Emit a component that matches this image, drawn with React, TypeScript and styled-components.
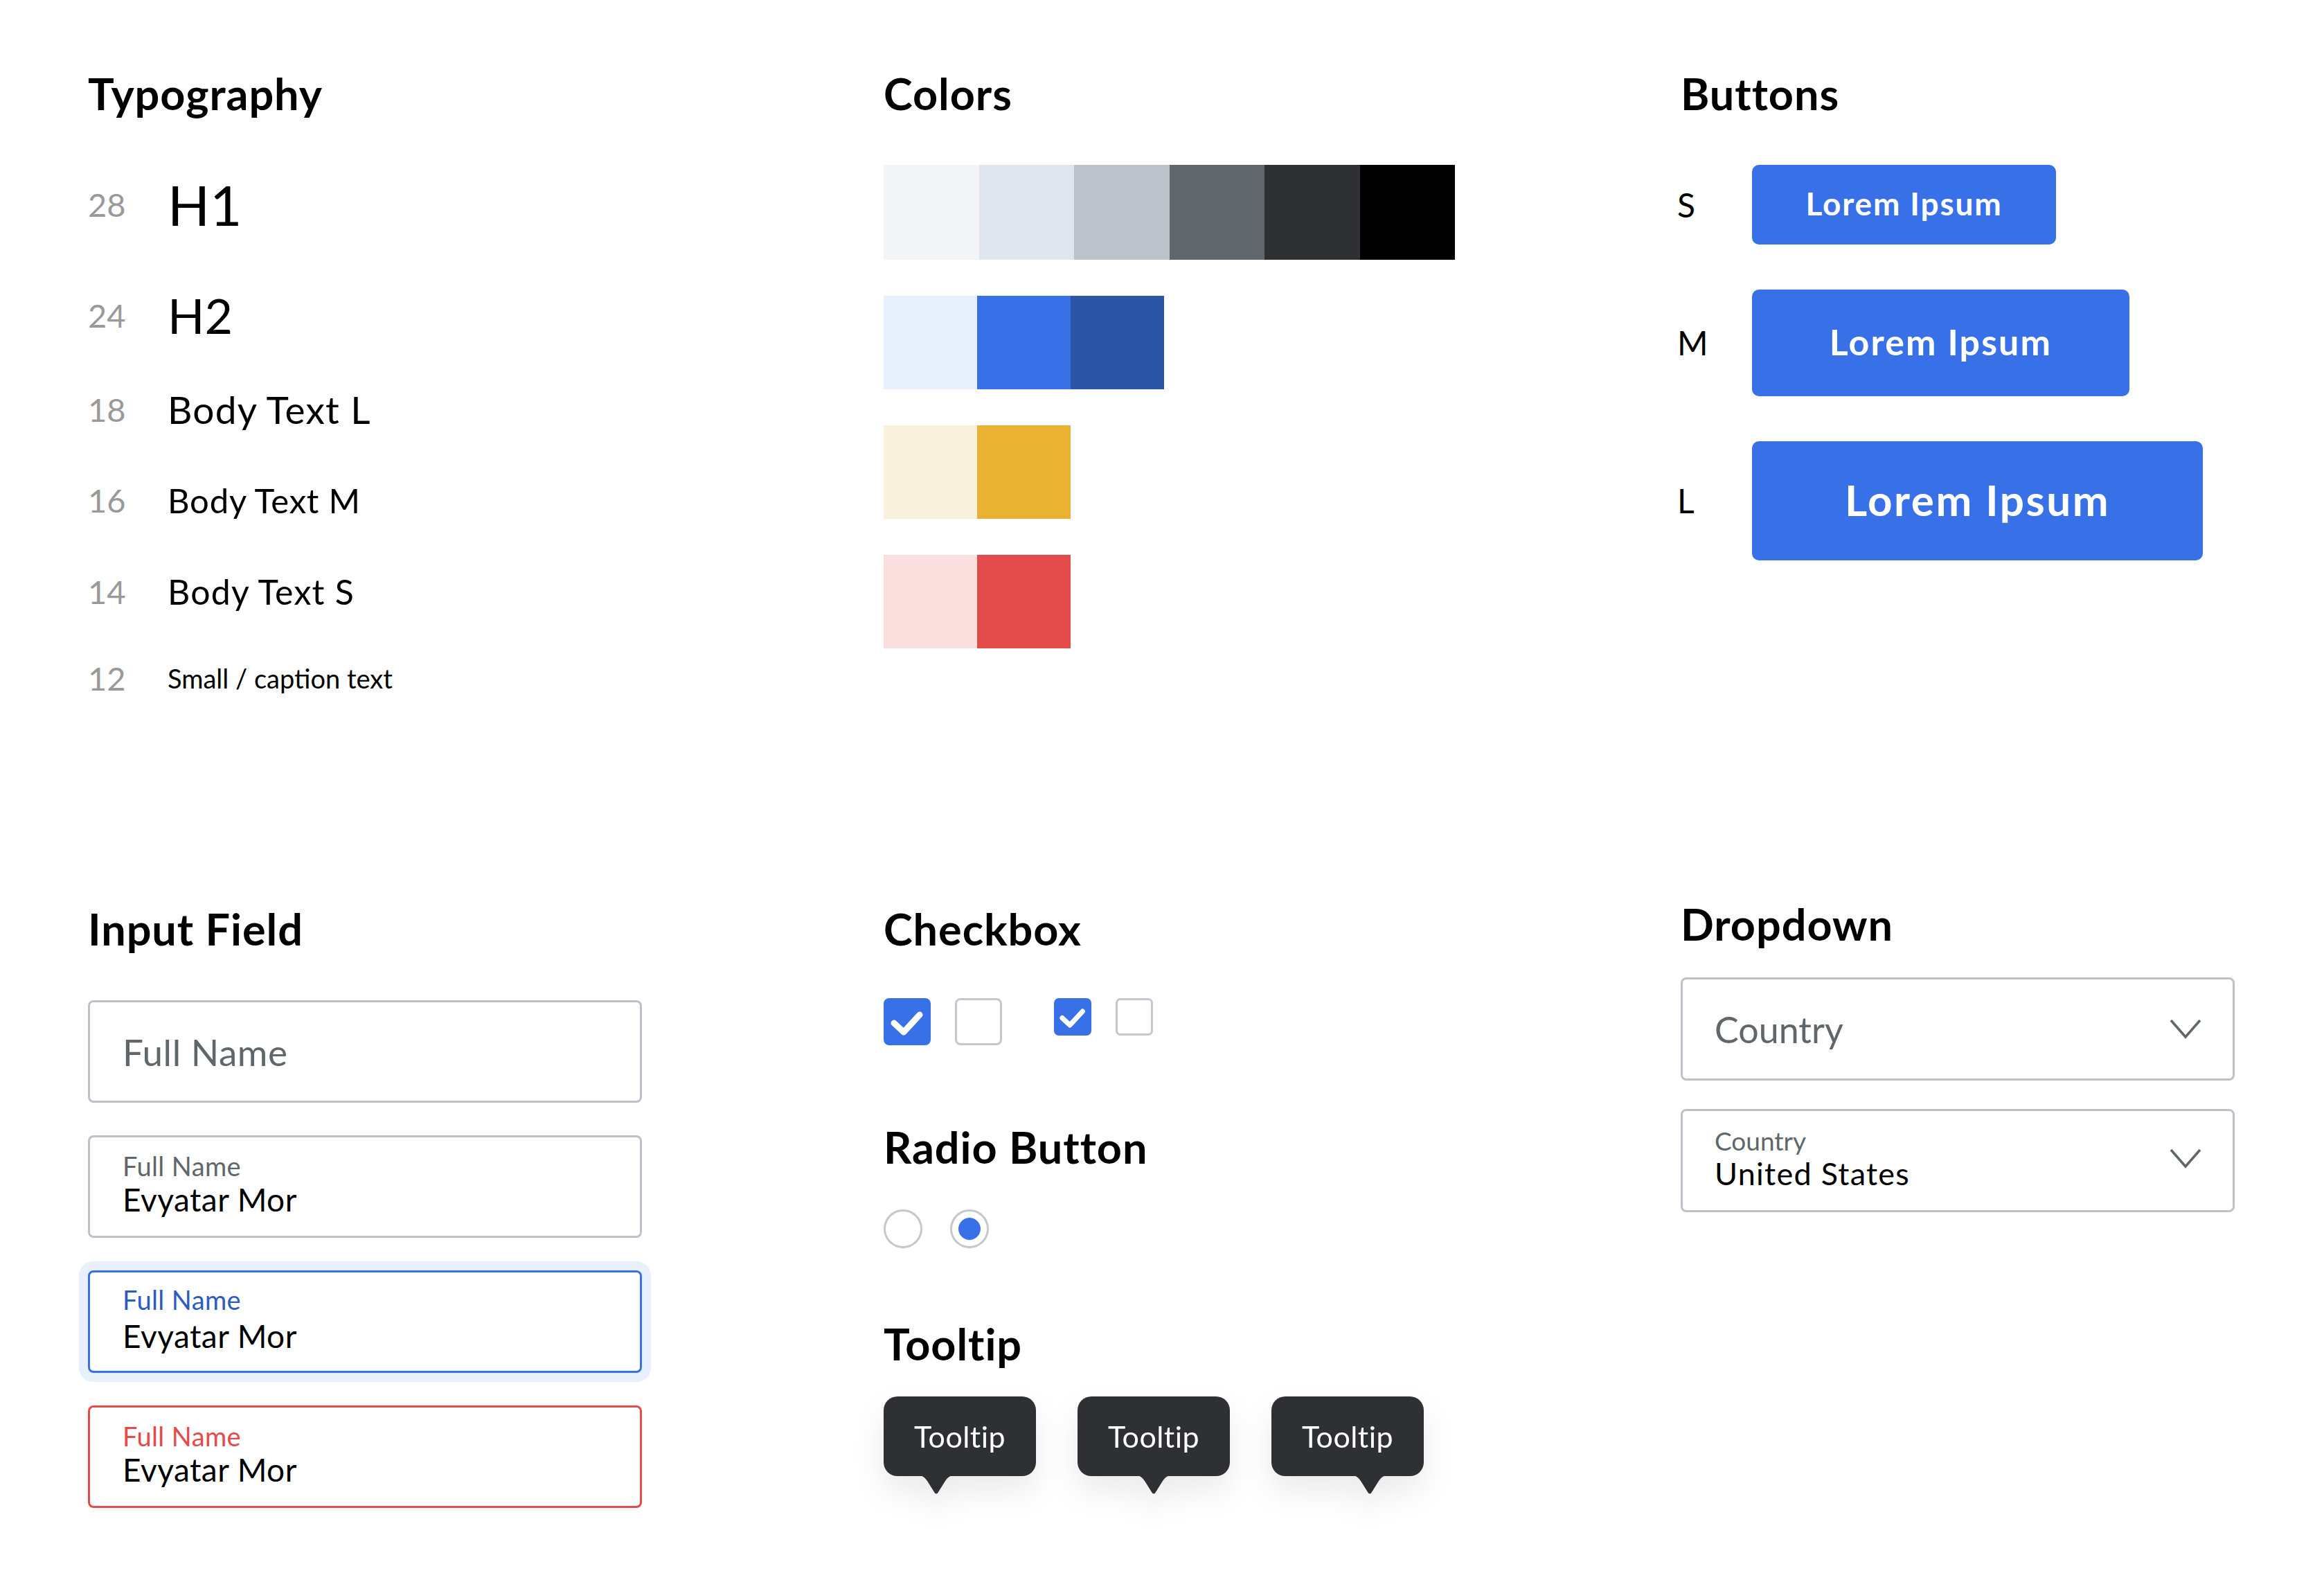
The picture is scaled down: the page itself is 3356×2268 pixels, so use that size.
import React from "react";
import styled, { createGlobalStyle } from "styled-components";

const GlobalStyle = createGlobalStyle`
  html, body {
    margin: 0;
    padding: 0;
    background: #ffffff;
  }
  body {
    font-family: Lato, "Open Sans", sans-serif;
    color: #000000;
  }
`;

const Page = styled.main`
  width: 3356px;
  height: 2268px;
  box-sizing: border-box;
  padding: 100px 0 0 127px;
  display: grid;
  grid-template-columns: 1149px 1151px 1fr;
  grid-template-rows: 1209px auto;
`;

const Section = styled.section<{ $shift?: number }>`
  display: flex;
  flex-direction: column;
  align-items: flex-start;
  margin-top: ${(p) => p.$shift ?? 0}px;
`;

const Title = styled.h2<{ $mt?: number; $mb: number }>`
  margin: ${(p) => p.$mt ?? 0}px 0 ${(p) => p.$mb}px;
  font-size: 63px;
  line-height: 63px;
  font-weight: 700;
  letter-spacing: 0.015em;
`;

/* typography */
const TypeRow = styled.div<{ $mt: number }>`
  display: flex;
  align-items: center;
  height: 100px;
  margin-top: ${(p) => p.$mt}px;
`;

const SizeNum = styled.span`
  width: 115px;
  font-size: 47px;
  line-height: 1;
  color: #999999;
`;

const Sample = styled.span<{ $size: number; $ls: number }>`
  font-size: ${(p) => p.$size}px;
  line-height: 1;
  letter-spacing: ${(p) => p.$ls}em;
`;

/* colors */
const Palette = styled.div`
  display: flex;
  flex-direction: column;
  gap: 52px;
`;

const SwatchRow = styled.div`
  display: flex;
`;

const Swatch = styled.div<{ $c: string; $w: number; $h: number }>`
  width: ${(p) => p.$w}px;
  height: ${(p) => p.$h}px;
  background: ${(p) => p.$c};
`;

/* buttons */
const ButtonRow = styled.div`
  display: flex;
  align-items: center;
  margin-bottom: 65px;
`;

const ButtonSize = styled.span`
  width: 108px;
  font-size: 48px;
  line-height: 1;
  margin-left: -5px;
`;

const Button = styled.button<{ $w: number; $h: number; $fs: number }>`
  width: ${(p) => p.$w}px;
  height: ${(p) => p.$h}px;
  border: none;
  border-radius: 10px;
  background: #3871e7;
  color: #ffffff;
  font-family: Lato, "Open Sans", sans-serif;
  font-weight: 700;
  font-size: ${(p) => p.$fs}px;
  letter-spacing: 0.04em;
  display: flex;
  align-items: center;
  justify-content: center;
  padding: 0 0 4px;
`;

/* inputs */
const Fields = styled.div`
  display: flex;
  flex-direction: column;
  gap: 47px;
`;

type FieldState = "default" | "focus" | "error";

const borderFor = (s: FieldState) =>
  s === "focus" ? "#3871e7" : s === "error" ? "#e44b4b" : "#bdc1ca";

const Field = styled.div<{ $state: FieldState; $stacked?: boolean }>`
  box-sizing: border-box;
  width: 800px;
  height: 148px;
  border: 3px solid ${(p) => borderFor(p.$state)};
  border-radius: 8px;
  padding: 0 48px ${(p) => (p.$stacked ? 7 : 0)}px 47px;
  display: flex;
  flex-direction: column;
  justify-content: center;
  gap: ${(p) => (p.$state === "focus" ? 11 : 7)}px;
  background: #ffffff;
  box-shadow: ${(p) => (p.$state === "focus" ? "0 0 0 13px #e8f0fc" : "none")};
`;

const Placeholder = styled.span`
  font-size: 53px;
  line-height: 1;
  color: #5f676b;
  letter-spacing: 0.01em;
`;

const FieldLabel = styled.span<{ $state: FieldState }>`
  font-size: 38px;
  line-height: 1;
  letter-spacing: 0.01em;
  color: ${(p) =>
    p.$state === "focus" ? "#2d5bbf" : p.$state === "error" ? "#e44b4b" : "#5f676b"};
`;

const FieldValue = styled.span`
  font-size: 46px;
  line-height: 1;
  letter-spacing: 0.01em;
  color: #000000;
`;

/* checkbox & radio */
const CheckRow = styled.div`
  display: flex;
  align-items: flex-start;
  gap: 75px;
`;

const CheckGroup = styled.div`
  display: flex;
  align-items: flex-start;
  gap: 35px;
`;

const Box = styled.div<{ $size: number; $on?: boolean }>`
  box-sizing: border-box;
  width: ${(p) => p.$size}px;
  height: ${(p) => p.$size}px;
  border-radius: ${(p) => (p.$size > 60 ? 8 : 7)}px;
  background: ${(p) => (p.$on ? "#3871e7" : "#ffffff")};
  border: ${(p) => (p.$on ? "none" : "3px solid #c3c7cf")};
  display: flex;
  svg {
    width: 100%;
    height: 100%;
  }
`;

const RadioRow = styled.div`
  display: flex;
  gap: 40px;
`;

const Radio = styled.div<{ $on?: boolean }>`
  box-sizing: border-box;
  width: 56px;
  height: 56px;
  border-radius: 50%;
  border: 3px solid #c3c7cf;
  display: flex;
  align-items: center;
  justify-content: center;
  &::after {
    content: "";
    display: ${(p) => (p.$on ? "block" : "none")};
    width: 32px;
    height: 32px;
    border-radius: 50%;
    background: #3871e7;
  }
`;

/* tooltip */
const TooltipRow = styled.div`
  display: flex;
  gap: 60px;
`;

const Bubble = styled.div`
  position: relative;
  width: 220px;
  height: 115px;
  border-radius: 20px;
  background: #2f3033;
  color: #ffffff;
  font-size: 43px;
  letter-spacing: 0.01em;
  display: flex;
  align-items: center;
  justify-content: center;
  filter: drop-shadow(0 22px 22px rgba(0, 0, 0, 0.08));
`;

const Tail = styled.svg<{ $apex: number }>`
  position: absolute;
  top: 113px;
  left: ${(p) => p.$apex - 30}px;
  width: 60px;
  height: 30px;
`;

/* dropdown */
const Selects = styled.div`
  display: flex;
  flex-direction: column;
  gap: 41px;
`;

const Select = styled.div<{ $stacked?: boolean }>`
  box-sizing: border-box;
  width: 800px;
  height: 149px;
  border: 3px solid #bdc1ca;
  border-radius: 8px;
  padding: 0 45px ${(p) => (p.$stacked ? 7 : 0)}px 46px;
  display: flex;
  align-items: center;
  justify-content: space-between;
`;

const SelectText = styled.div`
  display: flex;
  flex-direction: column;
  gap: 7px;
`;

const SelectPlaceholder = styled.span`
  font-size: 52px;
  line-height: 1;
  color: #5f676b;
`;

const SelectLabel = styled.span`
  font-size: 37px;
  line-height: 1;
  color: #5f676b;
`;

const SelectValue = styled.span`
  font-size: 45px;
  line-height: 1;
  letter-spacing: 0.028em;
  color: #000000;
`;

const Check = () => (
  <svg viewBox="0 0 68 68">
    <polyline
      points="15,36 29,49 52,24"
      fill="none"
      stroke="#ffffff"
      strokeWidth="9"
      strokeLinecap="round"
      strokeLinejoin="round"
    />
  </svg>
);

const Chevron = () => (
  <svg width="46" height="29" viewBox="0 0 46 29">
    <polyline points="2,2 23,26 44,2" fill="none" stroke="#5f676b" strokeWidth="3.5" />
  </svg>
);

const typeRows = [
  { n: 28, label: "H1", size: 80, ls: 0, mt: 0 },
  { n: 24, label: "H2", size: 70, ls: 0, mt: 60 },
  { n: 18, label: "Body Text L", size: 55, ls: 0.022, mt: 36 },
  { n: 16, label: "Body Text M", size: 49, ls: 0.016, mt: 31 },
  { n: 14, label: "Body Text S", size: 50, ls: 0.025, mt: 32 },
  { n: 12, label: "Small / caption text", size: 38, ls: 0, mt: 25 },
];

const palette = [
  { w: 137.5, h: 137, colors: ["#f3f5f9", "#dfe6f0", "#bdc1ca", "#5f676b", "#2f3033", "#000000"] },
  { w: 135, h: 135, colors: ["#e8f0fc", "#3871e7", "#2d55a6"] },
  { w: 135, h: 135, colors: ["#faf1dc", "#eab232"] },
  { w: 135, h: 135, colors: ["#f9e0de", "#e44b4b"] },
];

const buttons = [
  { s: "S", w: 439, h: 115, fs: 46 },
  { s: "M", w: 545, h: 154, fs: 52 },
  { s: "L", w: 651, h: 172, fs: 62 },
];

export default function App() {
  return (
    <>
      <GlobalStyle />
      <Page>
        <Section>
          <Title $mt={3} $mb={79}>
            Typography
          </Title>
          {typeRows.map((r) => (
            <TypeRow key={r.n} $mt={r.mt}>
              <SizeNum>{r.n}</SizeNum>
              <Sample $size={r.size} $ls={r.ls}>
                {r.label}
              </Sample>
            </TypeRow>
          ))}
        </Section>

        <Section>
          <Title $mt={3} $mb={72}>
            Colors
          </Title>
          <Palette>
            {palette.map((row, i) => (
              <SwatchRow key={i}>
                {row.colors.map((c) => (
                  <Swatch key={c} $c={c} $w={row.w} $h={row.h} />
                ))}
              </SwatchRow>
            ))}
          </Palette>
        </Section>

        <Section>
          <Title $mt={3} $mb={72}>
            Buttons
          </Title>
          {buttons.map((b) => (
            <ButtonRow key={b.s}>
              <ButtonSize>{b.s}</ButtonSize>
              <Button $w={b.w} $h={b.h} $fs={b.fs}>
                Lorem Ipsum
              </Button>
            </ButtonRow>
          ))}
        </Section>

        <Section>
          <Title $mb={72}>Input Field</Title>
          <Fields>
            <Field $state="default">
              <Placeholder>Full Name</Placeholder>
            </Field>
            <Field $state="default" $stacked>
              <FieldLabel $state="default">Full Name</FieldLabel>
              <FieldValue>Evyatar Mor</FieldValue>
            </Field>
            <Field $state="focus" $stacked>
              <FieldLabel $state="focus">Full Name</FieldLabel>
              <FieldValue>Evyatar Mor</FieldValue>
            </Field>
            <Field $state="error" $stacked>
              <FieldLabel $state="error">Full Name</FieldLabel>
              <FieldValue>Evyatar Mor</FieldValue>
            </Field>
          </Fields>
        </Section>

        <Section>
          <Title $mb={69}>Checkbox</Title>
          <CheckRow>
            <CheckGroup>
              <Box $size={68} $on>
                <Check />
              </Box>
              <Box $size={68} />
            </CheckGroup>
            <CheckGroup>
              <Box $size={54} $on>
                <Check />
              </Box>
              <Box $size={54} />
            </CheckGroup>
          </CheckRow>

          <Title $mt={115} $mb={59}>
            Radio Button
          </Title>
          <RadioRow>
            <Radio />
            <Radio $on />
          </RadioRow>

          <Title $mt={106} $mb={45}>
            Tooltip
          </Title>
          <TooltipRow>
            {[76, 110, 142].map((apex) => (
              <Bubble key={apex}>
                Tooltip
                <Tail $apex={apex} viewBox="0 0 60 30">
                  <path
                    d="M0 0 H60 C52 0 47 3 43 9 L33 25 Q30 30 27 25 L17 9 C13 3 8 0 0 0 Z"
                    fill="#2f3033"
                  />
                </Tail>
              </Bubble>
            ))}
          </TooltipRow>
        </Section>

        <Section $shift={-7}>
          <Title $mb={46}>Dropdown</Title>
          <Selects>
            <Select>
              <SelectPlaceholder>Country</SelectPlaceholder>
              <Chevron />
            </Select>
            <Select $stacked>
              <SelectText>
                <SelectLabel>Country</SelectLabel>
                <SelectValue>United States</SelectValue>
              </SelectText>
              <Chevron />
            </Select>
          </Selects>
        </Section>
      </Page>
    </>
  );
}
